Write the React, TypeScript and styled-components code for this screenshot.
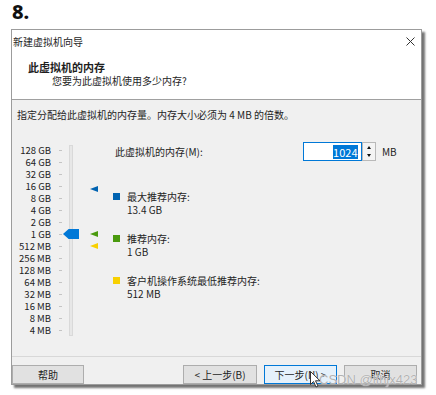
import styled, { createGlobalStyle } from 'styled-components'

const GlobalStyle = createGlobalStyle`
  body {
    margin: 0;
    background: #ffffff;
    font-family: "Noto Sans CJK SC", "Noto Sans", sans-serif;
    color: #1e1e1e;
  }
`

const Page = styled.div`
  position: relative;
  width: 436px;
  height: 395px;
  padding-left: 11px;
  box-sizing: border-box;
  overflow: hidden;
`

const StepNo = styled.div`
  height: 29px;
  padding: 1px 0 0 1px;
  box-sizing: border-box;
  font-family: "Noto Sans", sans-serif;
  font-size: 20px;
  font-weight: 800;
  line-height: 22px;
  color: #111;
`

const Dialog = styled.div`
  width: 411px;
  height: 356px;
  box-sizing: border-box;
  border: 1px solid #9c9c9c;
  background: #f0f0f0;
  display: flex;
  flex-direction: column;
  box-shadow: 3px 3px 2px rgba(0, 0, 0, 0.55);
`

const TitleBar = styled.div`
  height: 22px;
  display: flex;
  align-items: center;
  justify-content: space-between;
  padding: 0 6px 0 1px;
  background: #ffffff;
  font-size: 10px;
`

const Header = styled.div`
  height: 48px;
  box-sizing: border-box;
  padding: 8px 0 0 16px;
  background: #ffffff;
  border-bottom: 1px solid #a0a0a0;
`

const HeaderTitle = styled.div`
  font-size: 11px;
  font-weight: 700;
  line-height: 14px;
`

const HeaderSub = styled.div`
  margin-left: 24px;
  font-size: 10px;
  line-height: 13px;
`

const Body = styled.div`
  flex: 1;
  padding: 9px 5px 0;
`

const Hint = styled.div`
  font-size: 10px;
  line-height: 12px;
`

const Main = styled.div`
  display: flex;
  margin-top: 21px;
`

const Scale = styled.div`
  display: flex;
  padding-top: 2px;
`

const ScaleRows = styled.div`
  display: flex;
  flex-direction: column;
`

const ScaleRow = styled.div`
  height: 12px;
  display: flex;
  align-items: center;
`

const ScaleLabel = styled.span`
  display: block;
  width: 34px;
  height: 12px;
  overflow: hidden;
  text-align: right;
  font-size: 9.5px;
  line-height: 12px;
  color: #222;
  white-space: nowrap;
`

const Tick = styled.span`
  width: 3px;
  height: 1px;
  margin-left: 8px;
  background: #c4c4c4;
`

const Track = styled.div`
  position: relative;
  width: 4px;
  height: 191px;
  margin: 1px 0 0 7px;
  box-sizing: border-box;
  background: #e7e7e7;
  border: 1px solid #d9d9d9;
`

const Thumb = styled.div`
  position: absolute;
  left: -7px;
  width: 16px;
  height: 10px;
  background: #0078d7;
  clip-path: polygon(0 50%, 35% 0, 100% 0, 100% 100%, 35% 100%);
`

const MarkerCol = styled.div`
  position: relative;
  width: 8px;
  height: 192px;
  margin-left: 17px;
`

const Marker = styled.div<{ $color: string }>`
  position: absolute;
  left: 0;
  width: 0;
  height: 0;
  border-top: 3.5px solid transparent;
  border-bottom: 3.5px solid transparent;
  border-right: 8px solid ${(p) => p.$color};
`

const Settings = styled.div`
  margin-left: 15px;
  display: flex;
  flex-direction: column;
`

const InputRow = styled.div`
  height: 19px;
  display: flex;
  align-items: center;
`

const FieldLabel = styled.span`
  width: 188px;
  margin-left: 2px;
  font-size: 10px;
`

const SpinBox = styled.div`
  display: flex;
  height: 19px;
`

const NumberField = styled.div`
  width: 59px;
  box-sizing: border-box;
  border: 1px solid #0078d7;
  background: #ffffff;
  display: flex;
  align-items: center;
  justify-content: flex-end;
  padding-right: 3px;
`

const Selected = styled.span`
  background: #0078d7;
  color: #ffffff;
  font-size: 11px;
  line-height: 14px;
  padding: 0 0.5px;
`

const Spinner = styled.div`
  width: 14px;
  display: flex;
  flex-direction: column;
  box-sizing: border-box;
  border: 1px solid #b9b9b9;
  background: #f4f4f4;
`

const SpinHalf = styled.div`
  flex: 1;
  display: flex;
  align-items: center;
  justify-content: center;
`

const Arrow = styled.span<{ $down?: boolean }>`
  width: 0;
  height: 0;
  border-left: 2.5px solid transparent;
  border-right: 2.5px solid transparent;
  ${(p) =>
    p.$down ? 'border-top: 3px solid #111;' : 'border-bottom: 3px solid #111;'}
`

const Unit = styled.span`
  margin-left: 6px;
  font-size: 10px;
`

const Legend = styled.div<{ $gap: number }>`
  display: flex;
  margin-top: ${(p) => p.$gap}px;
`

const Swatch = styled.span<{ $color: string }>`
  width: 7px;
  height: 7px;
  margin-top: 3px;
  background: ${(p) => p.$color};
`

const LegendText = styled.div`
  margin-left: 7px;
  font-size: 10px;
  line-height: 13px;
`

const Footer = styled.div`
  height: 28px;
  box-sizing: border-box;
  border-top: 1px solid #d8d8d8;
  padding: 8px 4px 0 0;
  display: flex;
  gap: 7px;
`

const Button = styled.div<{ $primary?: boolean; $width?: number }>`
  width: ${(p) => p.$width ?? 73}px;
  height: 19px;
  box-sizing: border-box;
  border: 1px solid ${(p) => (p.$primary ? '#0078d7' : '#adadad')};
  background: ${(p) => (p.$primary ? '#e5f1fb' : '#e1e1e1')};
  display: flex;
  align-items: center;
  justify-content: center;
  font-size: 10px;
  white-space: pre;
`

const Spacer = styled.div`
  flex: 1;
`

const Watermark = styled.div`
  position: absolute;
  left: 319px;
  top: 372px;
  font-family: "Liberation Sans", sans-serif;
  font-size: 13px;
  color: #b2b2b2;
  text-shadow: 0 0 1px #ffffff;
  white-space: nowrap;
`

const Cursor = styled.svg`
  position: absolute;
  left: 310px;
  top: 371px;
`

const sizes = [
  '128 GB', '64 GB', '32 GB', '16 GB', '8 GB', '4 GB', '2 GB', '1 GB',
  '512 MB', '256 MB', '128 MB', '64 MB', '32 MB', '16 MB', '8 MB', '4 MB',
]

// position on the log scale, 0 = 128 GB, one row per halving
const rowOf = (mb: number) => Math.log2((128 * 1024) / mb)
const ROW = 12

const markers = [
  { mb: 13.4 * 1024, color: '#0063b1' },
  { mb: 1024, color: '#4a9a0e' },
  { mb: 512, color: '#f8d000' },
]

export default function App() {
  const current = 1024

  return (
    <Page>
      <GlobalStyle />
      <StepNo>8.</StepNo>
      <Dialog>
        <TitleBar>
          <span>新建虚拟机向导</span>
          <svg width="9" height="9" viewBox="0 0 9 9">
            <path d="M0.5 0.5 L8.5 8.5 M8.5 0.5 L0.5 8.5" stroke="#333" strokeWidth="1" />
          </svg>
        </TitleBar>
        <Header>
          <HeaderTitle>此虚拟机的内存</HeaderTitle>
          <HeaderSub>您要为此虚拟机使用多少内存?</HeaderSub>
        </Header>
        <Body>
          <Hint>指定分配给此虚拟机的内存量。内存大小必须为 4 MB 的倍数。</Hint>
          <Main>
            <Scale>
              <ScaleRows>
                {sizes.map((s) => (
                  <ScaleRow key={s}>
                    <ScaleLabel>{s}</ScaleLabel>
                    <Tick />
                  </ScaleRow>
                ))}
              </ScaleRows>
              <Track>
                <Thumb style={{ top: rowOf(current) * ROW + 6 - 2 - 5 }} />
              </Track>
              <MarkerCol>
                {markers.map((m) => (
                  <Marker
                    key={m.color}
                    $color={m.color}
                    style={{ top: rowOf(m.mb) * ROW + 6 - 3.5 }}
                  />
                ))}
              </MarkerCol>
            </Scale>
            <Settings>
              <InputRow>
                <FieldLabel>此虚拟机的内存(M):</FieldLabel>
                <SpinBox>
                  <NumberField>
                    <Selected>{current}</Selected>
                  </NumberField>
                  <Spinner>
                    <SpinHalf>
                      <Arrow />
                    </SpinHalf>
                    <SpinHalf>
                      <Arrow $down />
                    </SpinHalf>
                  </Spinner>
                </SpinBox>
                <Unit>MB</Unit>
              </InputRow>
              <Legend $gap={29}>
                <Swatch $color="#0063b1" />
                <LegendText>
                  最大推荐内存:
                  <br />
                  13.4 GB
                </LegendText>
              </Legend>
              <Legend $gap={16}>
                <Swatch $color="#4a9a0e" />
                <LegendText>
                  推荐内存:
                  <br />1 GB
                </LegendText>
              </Legend>
              <Legend $gap={16}>
                <Swatch $color="#f8d000" />
                <LegendText>
                  客户机操作系统最低推荐内存:
                  <br />
                  512 MB
                </LegendText>
              </Legend>
            </Settings>
          </Main>
        </Body>
        <Footer>
          <Button $width={72}>帮助</Button>
          <Spacer />
          <Button $width={74}>{'< 上一步(B)'}</Button>
          <Button $primary>{'下一步(N) >'}</Button>
          <Button>取消</Button>
        </Footer>
      </Dialog>
      <Watermark>CSDN @lfhjx423</Watermark>
      <Cursor width="11" height="17" viewBox="0 0 11 17">
        <path d="M0.5 0.5 L0.5 13.5 L3.5 10.5 L6 16 L8 15 L5.5 9.8 L10 9.8 Z" fill="#ffffff" stroke="#333" strokeWidth="1" />
      </Cursor>
    </Page>
  )
}
